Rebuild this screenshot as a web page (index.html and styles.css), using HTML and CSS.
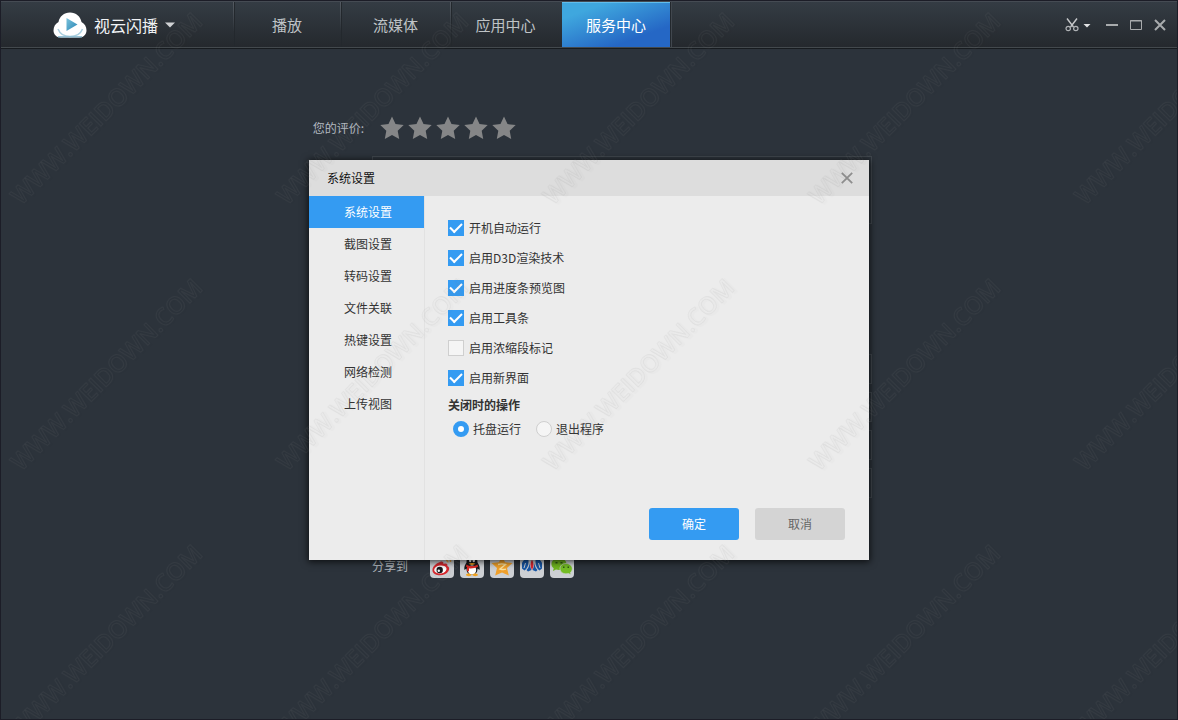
FILE: index.html
```html
<!DOCTYPE html>
<html lang="zh-CN">
<head>
<meta charset="utf-8">
<title>视云闪播</title>
<link rel="stylesheet" href="styles.css">
</head>
<body>
<div class="window">
  <header class="topbar">
    <button class="brand" type="button">
      <svg class="brand-logo" width="34" height="26" viewBox="0 0 34 26" aria-hidden="true">
        <defs>
          <linearGradient id="play" x1="0" y1="0" x2="1" y2="1"><stop offset="0" stop-color="#7cc3dc"/><stop offset="1" stop-color="#2784b4"/></linearGradient>
        </defs>
        <path d="M8 25.500C3 25.500.5 22 .5 18.500c0-4 2-7 5-8.500C6.500 4.500 11 .5 17 .5S27.500 4.500 28.500 10c3 1.500 5 4.500 5 8.500 0 3.500-2.500 7-7.500 7z" fill="#fff"/>
        <path d="M5 17c2 5 6 7.500 12 7.500S27.500 22 29.500 17" fill="none" stroke="#a9cfdf" stroke-width="1.500"/>
        <path d="M5 24.800h24" stroke="#8dbdd2" stroke-width="1.400"/>
        <path d="M13.500 6v13l11-6.500z" fill="url(#play)"/>
      </svg>
      <span>视云闪播</span>
      <svg width="10" height="6" viewBox="0 0 10 6" aria-hidden="true"><path d="M0 .5h10L5 5.500z" fill="#d0d2d4"/></svg>
    </button>
    <nav class="tabs">
      <a class="tab tab-narrow" href="#play">播放</a>
      <a class="tab" href="#stream">流媒体</a>
      <a class="tab" href="#apps">应用中心</a>
      <a class="tab tab-active" href="#service" aria-current="page">服务中心</a>
    </nav>
    <div class="tools">
      <button class="tool tool-cut" type="button" aria-label="截图">
        <svg width="26" height="14" viewBox="0 0 26 14" aria-hidden="true">
          <path d="M2 .5l6.500 8.500M12 .5L5.500 9" fill="none" stroke="#c6c8ca" stroke-width="1.400"/>
          <circle cx="3.200" cy="10.500" r="2.200" fill="none" stroke="#b0b3b6" stroke-width="1.200"/>
          <circle cx="10.800" cy="10.500" r="2.200" fill="none" stroke="#b0b3b6" stroke-width="1.200"/>
          <path d="M18.500 6h7L22 9.500z" fill="#e2e3e4"/>
        </svg>
      </button>
      <button class="tool" type="button" aria-label="最小化"><svg width="12" height="12" viewBox="0 0 12 12"><path d="M0 6h12" stroke="#a8abad" stroke-width="2"/></svg></button>
      <button class="tool" type="button" aria-label="最大化"><svg width="12" height="12" viewBox="0 0 12 12"><path d="M.5 1.500h11v9H.5zM0 2h12" fill="none" stroke="#a8abad"/></svg></button>
      <button class="tool" type="button" aria-label="关闭"><svg width="12" height="12" viewBox="0 0 12 12"><path d="M1 1l10 10M11 1L1 11" stroke="#a8abad" stroke-width="2"/></svg></button>
    </div>
  </header>

  <main class="feedback">
    <div class="rating">
      <span class="rating-label" id="rating-label">您的评价:</span>
      <div class="stars" role="group" aria-labelledby="rating-label">
        <button class="star" type="button" aria-label="1 星"><svg width="24" height="24" viewBox="0 0 24 24"><path id="star" d="M12 .5l3.500 7.600 8.200 1-6 5.700 1.500 8.200L12 19l-7.200 4 1.500-8.200-6-5.700 8.200-1z"/></svg></button>
        <button class="star" type="button" aria-label="2 星"><svg width="24" height="24" viewBox="0 0 24 24"><use href="#star"/></svg></button>
        <button class="star" type="button" aria-label="3 星"><svg width="24" height="24" viewBox="0 0 24 24"><use href="#star"/></svg></button>
        <button class="star" type="button" aria-label="4 星"><svg width="24" height="24" viewBox="0 0 24 24"><use href="#star"/></svg></button>
        <button class="star" type="button" aria-label="5 星"><svg width="24" height="24" viewBox="0 0 24 24"><use href="#star"/></svg></button>
      </div>
    </div>
    <div class="fields">
      <textarea class="field field-comment" aria-label="评价内容"></textarea>
      <input class="field" type="text" aria-label="联系方式一">
      <input class="field" type="text" aria-label="联系方式二">
      <input class="field" type="text" aria-label="联系方式三">
      <input class="field" type="text" aria-label="联系方式四">
    </div>
    <div class="share">
      <span class="share-label">分享到</span>
      <a class="share-link" href="#weibo" aria-label="微博"><svg width="24" height="24" viewBox="0 0 24 24">
        <path d="M16 3.500c3-.5 5 1.500 4.500 4.500M16 6.500c1.200-.2 2 .5 1.800 1.800" fill="none" stroke="#e9a03b" stroke-width="1.500"/>
        <path d="M10 8c2-1 4 0 3.500 2 3-1 4.500 0 3.800 2 2 .7 2.500 2.500 1.200 5-2 3.500-6 4.500-10 4.200-4-.4-6.500-2.700-6-6C3 12 7 9 10 8z" fill="#d7262c"/>
        <ellipse cx="10.300" cy="15.500" rx="6.200" ry="4" fill="#fff" transform="rotate(-8 10 15)"/>
        <circle cx="9.700" cy="16" r="3.200" fill="#17171b"/><circle cx="8.800" cy="16.800" r="1.200" fill="#fff"/>
      </svg></a>
      <a class="share-link" href="#qq" aria-label="QQ"><svg width="24" height="24" viewBox="0 0 24 24">
        <path d="M12 1.500c4 0 5.500 3 5.500 7 1.500 2 2.800 5 2 7.500l-2-1.500c0 4-2 6-5.500 6s-5.500-2-5.500-6l-2 1.500c-.8-2.500.5-5.500 2-7.500 0-4 1.500-7 5.500-7z" fill="#17171b"/>
        <ellipse cx="12" cy="16" rx="4.200" ry="4.500" fill="#fff"/>
        <path d="M6.500 10.500c3 2 8 2 11 0l.5 2.300c-3 1.500-7 2-9 1.500v3H7v-4l-1-.7z" fill="#dc2b26"/>
        <ellipse cx="10.200" cy="6.500" rx="1.200" ry="1.700" fill="#fff"/><ellipse cx="13.800" cy="6.500" rx="1.200" ry="1.700" fill="#fff"/>
        <path d="M8.500 9.800c2-1.200 5-1.200 7 0-2 1.500-5 1.500-7 0zM6 21c0-2 5-2 5.500 0-.5 1.500-5 1.500-5.500 0zM12.500 21c0-2 5-2 5.500 0-.5 1.500-5 1.500-5.500 0z" fill="#f2a31f"/>
      </svg></a>
      <a class="share-link" href="#qzone" aria-label="QQ空间"><svg width="24" height="24" viewBox="0 0 24 24">
        <path d="M12 1.500l3 6.700 7.500.8-5.500 5 1.800 7.500L12 18.500 5.200 21.500 7 14 1.500 9l7.500-.8z" fill="#f0a02b"/>
        <path d="M8 10.500c3-1 5-.8 7.500 0L10 15c2.500.8 4 .8 6 .2" fill="none" stroke="#fbe3a0" stroke-width="1.400"/>
      </svg></a>
      <a class="share-link" href="#renren" aria-label="人人网"><svg width="24" height="24" viewBox="0 0 24 24">
        <path d="M8.500 4v4c0 4-1.500 6.500-4 8.500L2 14.500V9c1-2.500 3-4.500 6.500-5zM15.500 4v4c0 4 1.500 6.500 4 8.500l2.500-2V9c-1-2.500-3-4.500-6.500-5z" fill="#1857a5"/>
        <path d="M5.500 9L4 14M18.500 9l1.500 5" stroke="#cdd0d4" stroke-width="1"/>
        <path d="M9.500 9c.5 3.500 1 5 2 7L8 17.500 6.500 16c2-2 2.800-4 3-7zM14.500 9c-.5 3.500-1 5-2 7l3.500 1.500 1.500-1.500c-2-2-2.800-4-3-7z" fill="#1857a5"/>
        <path d="M12 5.500c2 3.500 2 7 0 10.500-2-3.500-2-7 0-10.500z" fill="#d92732"/>
      </svg></a>
      <a class="share-link" href="#wechat" aria-label="微信"><svg width="24" height="24" viewBox="0 0 24 24">
        <path d="M9 4c4.500 0 7.500 2.700 7.500 6s-3 6-7.500 6l-3-.5L3 17l.7-2.800C2 13 1.500 11.500 1.500 10c0-3.300 3-6 7.500-6z" fill="#6fb51f"/>
        <path d="M16 9.500c3.500 0 6.300 2.300 6.300 5.200 0 1.500-.7 2.800-1.800 3.800l.5 2.300-2.500-1.300c-4.500 1.200-8.500-1-8.500-4.800 0-3 2.500-5.200 6-5.200z" fill="#74bd25" stroke="#cdd0d2" stroke-width=".7"/>
        <path d="M5.500 8h2v1.500h-2zM10.500 8h2v1.500h-2zM13 12.500h1.500V14H13zM17.500 12.500H19V14h-1.500z" fill="#315c12"/>
      </svg></a>
    </div>
  </main>

  <div class="overlay">
    <section class="dialog" role="dialog" aria-labelledby="dialog-title">
      <header class="dialog-head">
        <h1 class="dialog-title" id="dialog-title">系统设置</h1>
        <button class="dialog-close" type="button" aria-label="关闭"><svg width="12" height="12" viewBox="0 0 12 12"><path d="M.8.8l10.400 10.400M11.200.8L.8 11.200" stroke="#8e8e8e" stroke-width="1.800"/></svg></button>
      </header>
      <div class="dialog-body">
        <nav class="side">
          <a class="side-item side-active" href="#system" aria-current="true">系统设置</a>
          <a class="side-item" href="#capture">截图设置</a>
          <a class="side-item" href="#transcode">转码设置</a>
          <a class="side-item" href="#files">文件关联</a>
          <a class="side-item" href="#hotkeys">热键设置</a>
          <a class="side-item" href="#network">网络检测</a>
          <a class="side-item" href="#upload">上传视图</a>
        </nav>
        <form class="settings">
          <label class="option"><input class="check" type="checkbox" checked>开机自动运行</label>
          <label class="option"><input class="check" type="checkbox" checked>启用D3D渲染技术</label>
          <label class="option"><input class="check" type="checkbox" checked>启用进度条预览图</label>
          <label class="option"><input class="check" type="checkbox" checked>启用工具条</label>
          <label class="option"><input class="check" type="checkbox">启用浓缩段标记</label>
          <label class="option"><input class="check" type="checkbox" checked>启用新界面</label>
          <fieldset class="closing">
            <legend class="closing-title">关闭时的操作</legend>
            <div class="closing-options">
              <label class="choice"><input class="radio" type="radio" name="closing" checked>托盘运行</label>
              <label class="choice"><input class="radio" type="radio" name="closing">退出程序</label>
            </div>
          </fieldset>
          <div class="actions">
            <button class="btn btn-primary" type="button">确定</button>
            <button class="btn" type="button">取消</button>
          </div>
        </form>
      </div>
    </section>
  </div>

  <svg class="watermark" width="100%" height="100%" aria-hidden="true">
    <defs>
      <pattern id="mark" width="266" height="266" patternUnits="userSpaceOnUse">
        <g transform="translate(20 205) rotate(-45)">
          <text class="mark-shade" x="1" y="2">WWW.WEIDOWN.COM</text>
          <text class="mark-line">WWW.WEIDOWN.COM</text>
        </g>
      </pattern>
    </defs>
    <rect width="100%" height="100%" fill="url(#mark)"/>
  </svg>
</div>
</body>
</html>
```

FILE: styles.css
```css
* { box-sizing: border-box; }

body {
  margin: 0;
  font: 12px/16px "Noto Sans CJK SC", "Noto Sans", sans-serif;
  color: #333;
}

button, input, textarea { font: inherit; }
button { padding: 0; border: 0; background: none; cursor: pointer; }
a { color: inherit; text-decoration: none; }
svg { display: block; }

.window {
  position: relative;
  min-height: 100vh;
  border: 1px solid #1c1d27;
  background: #2c333b;
}

.topbar {
  display: flex;
  height: 48px;
  border-top: 1px solid #454b53;
  border-bottom: 1px solid #171b1f;
  background: linear-gradient(#343c44, #24282d);
  box-shadow: inset 0 -1px #43494d;
}

.brand {
  display: flex;
  align-items: center;
  gap: 7px;
  width: 232px;
  padding: 0 0 0 52px;
  color: #f0f2f4;
  font-size: 16px;
}

.tabs { display: flex; }

.tab {
  display: flex;
  align-items: center;
  justify-content: center;
  width: 110px;
  height: 45px;
  border-left: 1px solid;
  border-image: linear-gradient(#555b62, transparent 65%) 1;
  box-shadow: inset 1px 0 #23282d;
  color: #bfc3c6;
  font-size: 15px;
}

.tab-narrow { width: 107px; }

.tab-active {
  width: 108px;
  margin-left: 2px;
  border: 0;
  background: linear-gradient(160deg, #3fa7de 20%, #2567c5 75%);
  box-shadow: inset 0 1px #61bdec, 1px 0 #23282d, 2px 0 #41474e;
  color: #fff;
}

.tools {
  display: flex;
  align-items: center;
  gap: 12px;
  margin-left: auto;
  padding-right: 11px;
}

.tool-cut { margin-right: 3px; }

.feedback {
  width: 566px;
  margin: 0 auto;
  padding-top: 66px;
}

.rating { display: flex; align-items: center; height: 26px; }
.rating-label { width: 58px; color: #b3b9c0; text-align: right; }
.stars { display: flex; gap: 4px; padding-left: 16px; }
.star { fill: #858687; }

.fields {
  display: flex;
  flex-direction: column;
  gap: 8px;
  padding: 15px 0 0 66px;
}

.field {
  width: 100%;
  height: 30px;
  padding: 4px 8px;
  border: 1px solid #41484f;
  background: transparent;
  color: #b3b9c0;
}

.field-comment { height: 68px; margin-bottom: 122px; resize: none; }

.share {
  display: flex;
  align-items: center;
  gap: 6px;
  padding: 56px 0 0 66px;
}

.share-label { width: 52px; color: #aeb4ba; }

.share-link {
  border-radius: 4px;
  background: #cdd0d4;
}

.overlay {
  position: absolute;
  inset: 0;
  display: grid;
  place-items: center;
}

.dialog {
  display: flex;
  flex-direction: column;
  width: 560px;
  min-height: 400px;
  background: #ececec;
  box-shadow: 0 1px 7px 1px rgba(0, 0, 0, .7);
}

.dialog-head {
  display: flex;
  align-items: center;
  justify-content: space-between;
  height: 36px;
  padding: 0 16px 0 18px;
  background: #ddd;
}

.dialog-title { margin: 0; color: #111; font-size: 12px; font-weight: 400; }

.dialog-body { display: flex; flex: 1; }

.side { width: 116px; border-right: 1px solid #e2e2e2; }

.side-item {
  display: flex;
  align-items: center;
  height: 32px;
  padding-left: 35px;
}

.side-active { background: #349bf2; color: #fff; }

.settings {
  display: flex;
  flex: 1;
  flex-direction: column;
  padding: 17px 24px 20px 23px;
}

.option {
  display: flex;
  align-items: center;
  align-self: flex-start;
  gap: 5px;
  height: 30px;
}

.check, .radio {
  width: 16px;
  height: 16px;
  margin: 0;
  border: 1px solid #cfcfcf;
  background: #f5f5f5;
  appearance: none;
}

.check:checked {
  display: grid;
  place-items: center;
  border-color: #349bf2;
  background: #349bf2;
}

.check:checked::before {
  content: "";
  width: 10px;
  height: 5px;
  margin-bottom: 4px;
  border: solid #fff;
  border-width: 0 0 2px 2px;
  transform: rotate(-45deg);
}

.radio { border-radius: 50%; }
.radio:checked { border: 5px solid #349bf2; background: #fff; }

.closing { margin: 0; padding: 4px 0 0; border: 0; }
.closing-title { padding: 4px 0 0; font-weight: 700; }
.closing-options { display: flex; gap: 15px; padding: 4px 0 0 5px; }
.choice { display: flex; align-items: center; gap: 4px; }

.actions {
  display: flex;
  justify-content: flex-end;
  gap: 16px;
  margin-top: auto;
}

.btn {
  width: 90px;
  height: 32px;
  border-radius: 3px;
  background: #d4d4d4;
  color: #666;
}

.btn-primary { background: #349bf2; color: #fff; }

.watermark {
  position: absolute;
  inset: 0;
  pointer-events: none;
}

.mark-line, .mark-shade {
  font: 600 24px "Open Sans", sans-serif;
  fill: none;
  stroke-linejoin: round;
}

.mark-line { stroke: rgba(135, 130, 135, .09); }
.mark-shade { stroke: rgba(0, 0, 0, .01); stroke-width: 2px; }
```
